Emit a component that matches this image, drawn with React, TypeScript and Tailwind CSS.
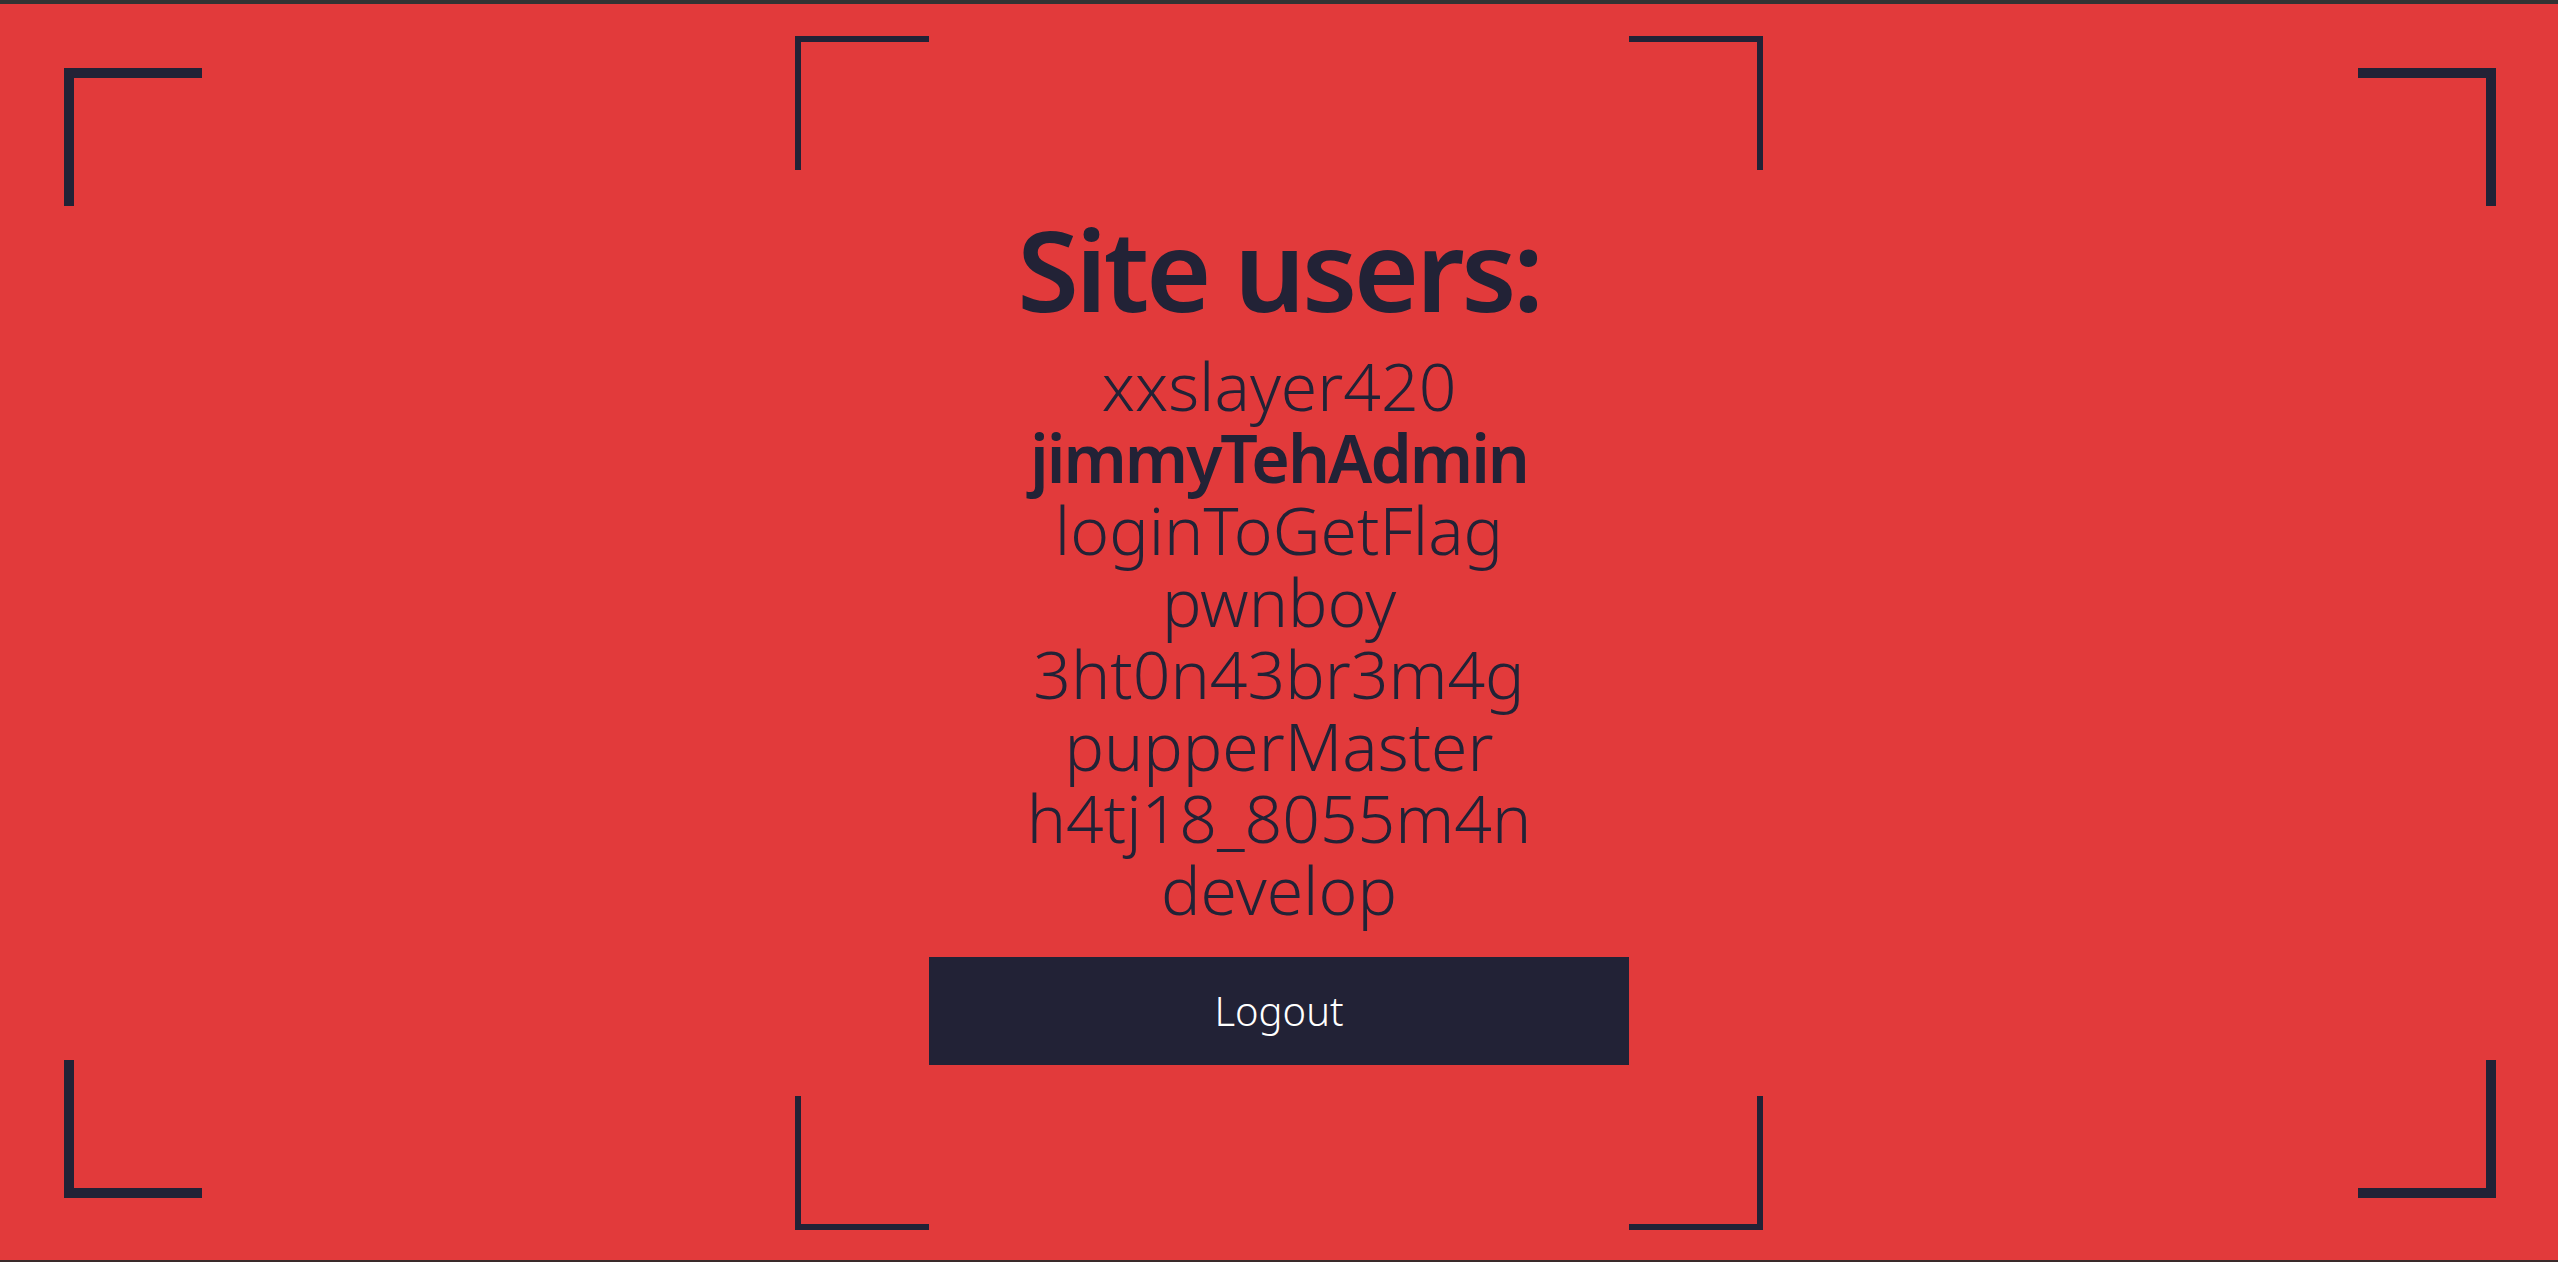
const users = [
  { name: 'xxslayer420', admin: false },
  { name: 'jimmyTehAdmin', admin: true },
  { name: 'loginToGetFlag', admin: false },
  { name: 'pwnboy', admin: false },
  { name: '3ht0n43br3m4g', admin: false },
  { name: 'pupperMaster', admin: false },
  { name: 'h4tj18_8055m4n', admin: false },
  { name: 'develop', admin: false },
];

// four corner brackets laid out in two rows, sitting over whatever box they frame
function Brackets({ big }: { big?: boolean }) {
  const size = big ? 'h-[138px] w-[138px]' : 'h-[134px] w-[134px]';
  const tl = big ? 'border-l-[10px] border-t-[10px]' : 'border-l-[6px] border-t-[6px]';
  const tr = big ? 'border-r-[10px] border-t-[10px]' : 'border-r-[6px] border-t-[6px]';
  const bl = big ? 'border-b-[10px] border-l-[10px]' : 'border-b-[6px] border-l-[6px]';
  const br = big ? 'border-b-[10px] border-r-[10px]' : 'border-b-[6px] border-r-[6px]';
  return (
    <div
      className={`pointer-events-none absolute inset-0 flex flex-col justify-between ${
        big ? 'pb-[62px] pl-[64px] pr-[62px] pt-[64px]' : ''
      }`}
    >
      <div className="flex justify-between">
        <div className={`${size} ${tl} border-[#222236]`} />
        <div className={`${size} ${tr} border-[#222236]`} />
      </div>
      <div className="flex justify-between">
        <div className={`${size} ${bl} border-[#222236]`} />
        <div className={`${size} ${br} border-[#222236]`} />
      </div>
    </div>
  );
}

export default function App() {
  return (
    <div
      className="relative h-[1262px] w-full overflow-hidden border-b-2 border-t-4 border-b-[#3a2a2a] border-t-[#333333] bg-[#e23a3b] text-[#222236]"
      style={{ fontFamily: '"Noto Sans", "Open Sans", sans-serif' }}
    >
      <Brackets big />

      <div className="relative mx-auto mt-[32px] h-[1194px] w-[968px]">
        <Brackets />

        <div className="flex flex-col items-center pt-[166px]">
          <h1 className="text-[112px] font-semibold leading-[1.2] tracking-[-0.03em]">Site users:</h1>
          <ul className="mt-[13px] flex flex-col items-center">
            {users.map((u) => (
              <li
                key={u.name}
                className={`text-[66px] leading-[72px] ${
                  u.admin ? 'font-semibold tracking-[-0.03em]' : 'font-light'
                }`}
              >
                {u.name}
              </li>
            ))}
          </ul>
          <button className="mt-[32px] flex h-[108px] w-[700px] items-center justify-center bg-[#222236] text-[40px] font-light text-white">
            Logout
          </button>
        </div>
      </div>
    </div>
  );
}
